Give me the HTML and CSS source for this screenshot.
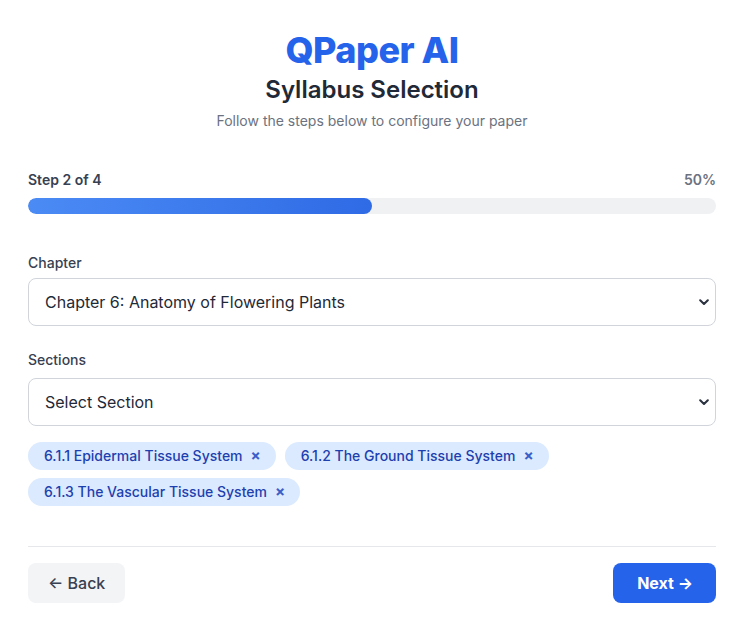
FILE: index.html
```html
<!DOCTYPE html>
<html lang="en">
<head>
<meta charset="utf-8">
<title>QPaper AI - Syllabus Selection</title>
<link rel="stylesheet" href="styles.css">
</head>
<body>
<main class="page">
  <header class="header">
    <h1 class="brand">QPaper AI</h1>
    <h2 class="title">Syllabus Selection</h2>
    <p class="subtitle">Follow the steps below to configure your paper</p>
  </header>

  <section class="progress">
    <div class="progress-head">
      <span class="step">Step 2 of 4</span>
      <span class="pct">50%</span>
    </div>
    <div class="track"><div class="fill" style="width:50%"></div></div>
  </section>

  <div class="field">
    <label class="label" for="chapter">Chapter</label>
    <div class="select-wrap">
      <select id="chapter" class="select">
        <option>Chapter 6: Anatomy of Flowering Plants</option>
      </select>
      <svg class="chev" width="10" height="7" viewBox="0 0 10 7"><path d="M1.2 1.3 L5 5 L8.8 1.3" fill="none" stroke="#2b3340" stroke-width="2.1" stroke-linecap="round" stroke-linejoin="round"/></svg>
    </div>
  </div>

  <div class="field">
    <label class="label" for="sections">Sections</label>
    <div class="select-wrap">
      <select id="sections" class="select">
        <option>Select Section</option>
      </select>
      <svg class="chev" width="10" height="7" viewBox="0 0 10 7"><path d="M1.2 1.3 L5 5 L8.8 1.3" fill="none" stroke="#2b3340" stroke-width="2.1" stroke-linecap="round" stroke-linejoin="round"/></svg>
    </div>
    <div class="chips">
      <span class="chip">6.1.1 Epidermal Tissue System <span class="x">×</span></span>
      <span class="chip">6.1.2 The Ground Tissue System <span class="x">×</span></span>
      <span class="chip">6.1.3 The Vascular Tissue System <span class="x">×</span></span>
    </div>
  </div>

  <footer class="actions">
    <button class="btn btn-back">← Back</button>
    <button class="btn btn-next">Next →</button>
  </footer>
</main>
</body>
</html>
```
FILE: styles.css
```css
* { box-sizing: border-box; }
html, body { margin: 0; padding: 0; background: #ffffff; }
body {
  font-family: Inter, "Noto Sans", "Liberation Sans", sans-serif;
  color: #374151;
}
.page {
  padding: 30px 26px 0 28px;
}
.header { text-align: center; margin-bottom: 39px; }
.brand {
  margin: 0;
  font-size: 36px;
  line-height: 40px;
  font-weight: 800;
  color: #2563eb;
  letter-spacing: -0.5px;
}
.title {
  margin: 4px 0 0;
  font-size: 24px;
  line-height: 32px;
  font-weight: 600;
  color: #1f2937;
}
.subtitle {
  margin: 5px 0 0;
  font-size: 14px;
  line-height: 20px;
  color: #6b7280;
}
.progress { margin-bottom: 39px; }
.progress-head {
  display: flex;
  justify-content: space-between;
  font-size: 14px;
  line-height: 20px;
  font-weight: 600;
  margin-bottom: 8px;
}
.step { color: #374151; }
.pct { color: #6b7280; }
.track {
  height: 16px;
  border-radius: 999px;
  background: #f0f1f3;
  overflow: hidden;
}
.fill {
  height: 100%;
  border-radius: 999px;
  background: linear-gradient(90deg, #4b8bf5, #2f6be5);
}
.field { margin-bottom: 24px; }
.label {
  display: block;
  font-size: 14px;
  line-height: 20px;
  font-weight: 500;
  color: #374151;
  margin-bottom: 5px;
}
.field + .field .label { margin-bottom: 8px; }
.select-wrap { position: relative; }
.select {
  display: block;
  width: 100%;
  height: 48px;
  appearance: none;
  -webkit-appearance: none;
  background: #ffffff;
  border: 1px solid #d1d5db;
  border-radius: 8px;
  padding: 0 36px 0 16px;
  font-family: inherit;
  font-size: 16px;
  color: #1f2937;
}
.chev {
  position: absolute;
  right: 7px;
  top: 21px;
  pointer-events: none;
}
.chips {
  display: flex;
  flex-wrap: wrap;
  gap: 8px 9px;
  margin-top: 16px;
  max-width: 560px;
}
.chip {
  display: inline-flex;
  align-items: center;
  height: 28px;
  padding: 0 15px 0 16px;
  border-radius: 999px;
  background: #dbeafe;
  color: #1e40af;
  font-size: 14px;
  line-height: 20px;
  font-weight: 500;
}
.x {
  margin-left: 8px;
  font-size: 15px;
  font-weight: 700;
  color: #3b5fc9;
}
.actions {
  display: flex;
  justify-content: space-between;
  margin-top: 40px;
  padding-top: 16px;
  border-top: 1px solid #e5e7eb;
}
.btn {
  height: 40px;
  border: none;
  border-radius: 8px;
  font-family: inherit;
  font-size: 16px;
  line-height: 24px;
  padding: 0 20px;
}
.btn-back { background: #f3f4f6; color: #374151; font-weight: 500; }
.btn-next { background: #2563eb; color: #ffffff; font-weight: 700; padding: 0 23px 0 24px; }
```
